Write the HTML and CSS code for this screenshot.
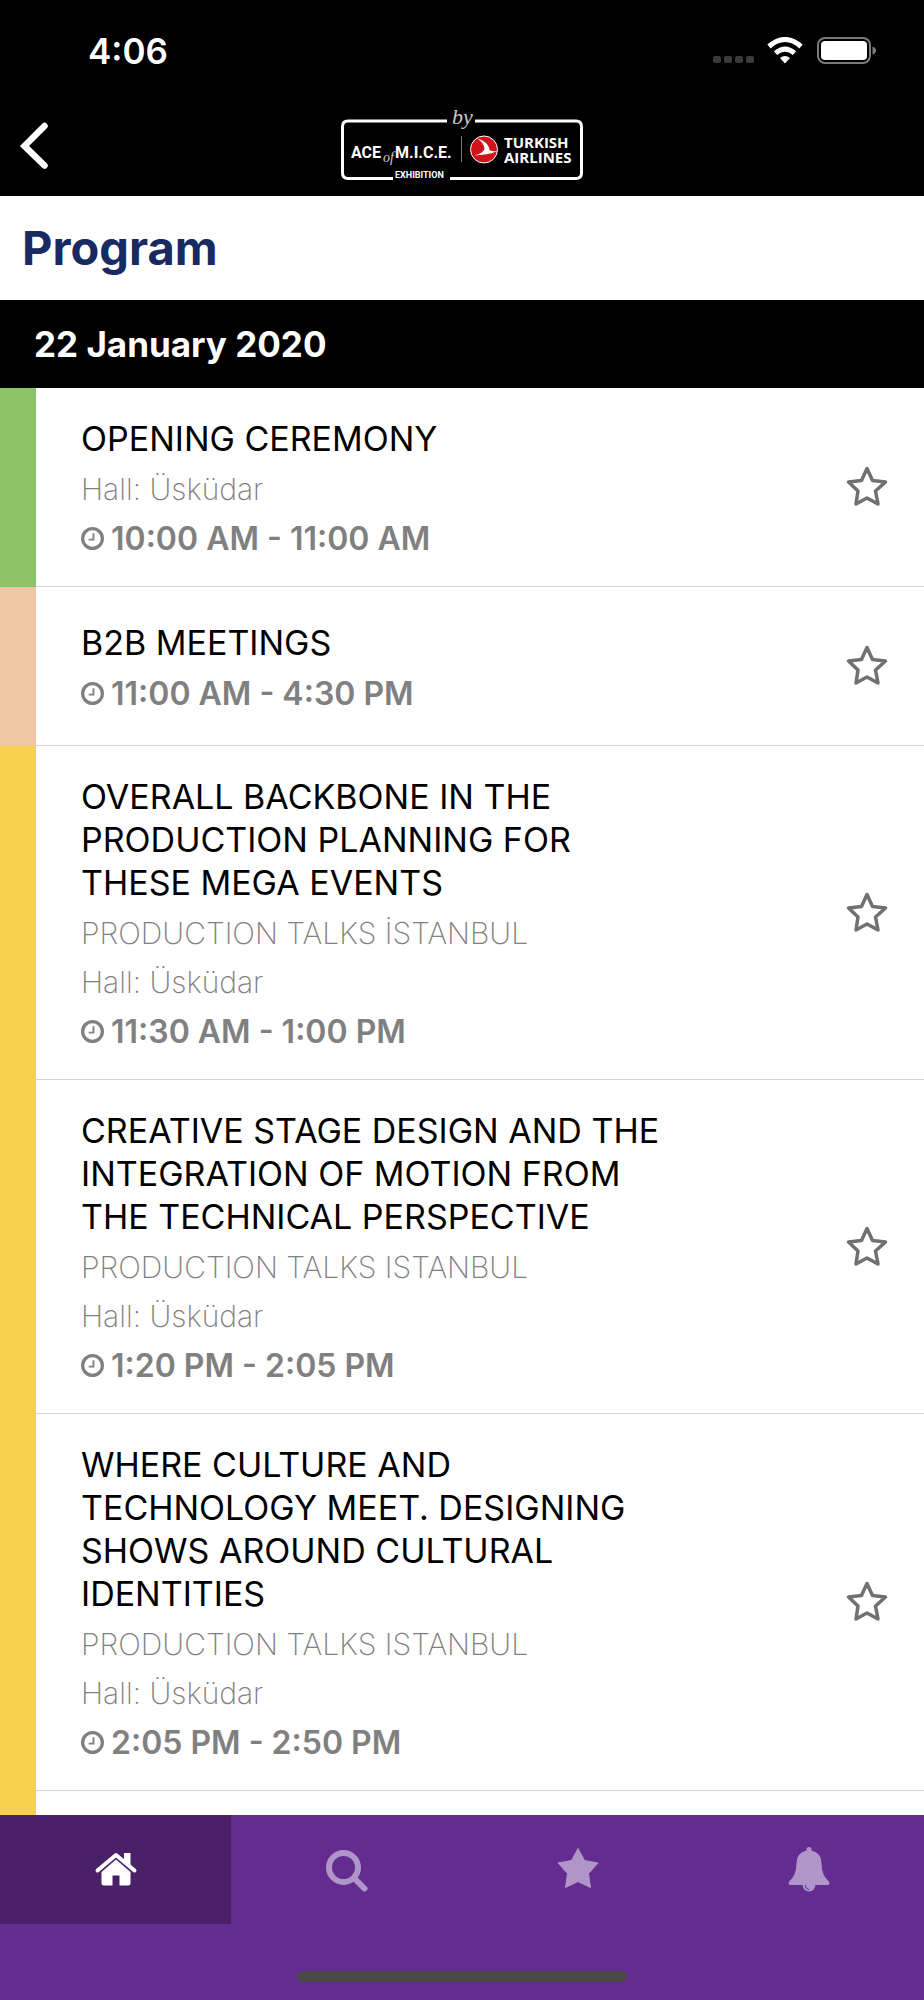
FILE: index.html
```html
<!DOCTYPE html>
<html lang="en">

<head>
    <meta charset="UTF-8">
    <meta name="viewport" content="width=device-width, initial-scale=1.0">
    <title>Program</title>
    <link rel="stylesheet" href="styles.css">
</head>

<body>
    <!-- shared icons -->
    <svg class="sprite" aria-hidden="true">
        <symbol id="clock" viewBox="0 0 24 24">
            <circle cx="12" cy="12" r="10.300" fill="none" stroke="currentColor" stroke-width="3.400" />
            <path d="M13 6.500V13.200H8" fill="none" stroke="currentColor" stroke-width="2" />
        </symbol>
        <symbol id="star" viewBox="0 1 42 42">
            <path d="M21 3.500L26.500 15.500L39.500 17L29.500 26L32 39L21 33L10 39L12 26L2.500 17L15.500 15.500Z" fill="none" stroke="currentColor" stroke-width="3.500" stroke-linejoin="round" />
        </symbol>
    </svg>

    <div class="app">
        <header class="top">
            <div class="status">
                <span class="time">4:06</span>
                <svg class="status-icons" viewBox="0 0 164 28" aria-hidden="true">
                    <g fill="#3a3a3a">
                        <rect x="1" y="19" width="8" height="7" rx="2" />
                        <rect x="12" y="19" width="8" height="7" rx="2" />
                        <rect x="23" y="19" width="8" height="7" rx="2" />
                        <rect x="34" y="19" width="8" height="7" rx="2" />
                    </g>
                    <g fill="none" stroke="#fff" stroke-width="5">
                        <path d="M57 9.500Q73 -4.500 89 9.500" />
                        <path d="M63.500 16.200Q73 8.200 82.500 16.200" />
                    </g>
                    <path d="M68 21Q73 17 78 21L73 26.500Z" fill="#fff" />
                    <rect x="106" y="1" width="52" height="25" rx="7" fill="none" stroke="#7a7a7a" stroke-width="2" />
                    <rect x="109" y="4" width="46" height="19" rx="4" fill="#fff" />
                    <path d="M160.500 9.500Q164 10.500 164 13.500Q164 16.500 160.500 17.500Z" fill="#7a7a7a" />
                </svg>
            </div>
            <div class="nav">
                <button class="back" type="button" aria-label="Back">
                    <svg viewBox="0 0 28 48"><path d="M24.500 4L4.500 24L24.500 43.500" fill="none" stroke="currentColor" stroke-width="6.500" stroke-linecap="round" /></svg>
                </button>
                <svg class="logo" viewBox="0 0 244 78" role="img" aria-label="ACE of M.I.C.E. Exhibition by Turkish Airlines">
                    <g fill="none" stroke="#fff" stroke-width="3">
                        <path d="M107 17H8Q2.500 17 2.500 22.500V69Q2.500 74.500 8 74.500H53" />
                        <path d="M135 17H236Q241.500 17 241.500 22.500V69Q241.500 74.500 236 74.500H110" />
                    </g>
                    <g fill="#fff">
                        <text class="logo-main" x="11" y="54">ACE</text>
                        <text class="logo-main" x="55" y="54">M.I.C.E.</text>
                        <text class="logo-sub" x="55" y="74">EXHIBITION</text>
                        <text class="logo-script" x="43" y="58">of</text>
                        <text class="logo-script by" x="112" y="20">by</text>
                        <text class="logo-brand" x="164" y="44">TURKISH</text>
                        <text class="logo-brand" x="164" y="59">AIRLINES</text>
                    </g>
                    <path d="M121.500 32V58" stroke="#777" />
                    <circle cx="144" cy="45.500" r="13.500" fill="#d0121b" stroke="#fff" />
                    <!-- bird -->
                    <path d="M137 34.500Q148 37 150 46.500Q154 48 158.500 46.500Q151 50 145 50.500L134.500 51.500Q143 49 144.500 45Q144.500 39 137 34.500Z" fill="#fff" />
                </svg>
            </div>
        </header>

        <main class="content">
            <h1 class="page-title">Program</h1>
            <h2 class="date">22 January 2020</h2>
            <ul class="sessions">
                <li class="session green">
                    <div class="info">
                        <h3>OPENING CEREMONY</h3>
                        <p>Hall: Üsküdar</p>
                        <p class="hours"><svg><use href="#clock" /></svg>10:00 AM - 11:00 AM</p>
                    </div>
                    <button class="fav" type="button" aria-label="Add to favourites"><svg><use href="#star" /></svg></button>
                </li>
                <li class="session peach">
                    <div class="info">
                        <h3>B2B MEETINGS</h3>
                        <p class="hours"><svg><use href="#clock" /></svg>11:00 AM - 4:30 PM</p>
                    </div>
                    <button class="fav" type="button" aria-label="Add to favourites"><svg><use href="#star" /></svg></button>
                </li>
                <li class="session yellow">
                    <div class="info">
                        <h3>OVERALL BACKBONE IN THE PRODUCTION PLANNING FOR THESE MEGA EVENTS</h3>
                        <p>PRODUCTION TALKS İSTANBUL</p>
                        <p>Hall: Üsküdar</p>
                        <p class="hours"><svg><use href="#clock" /></svg>11:30 AM - 1:00 PM</p>
                    </div>
                    <button class="fav" type="button" aria-label="Add to favourites"><svg><use href="#star" /></svg></button>
                </li>
                <li class="session yellow">
                    <div class="info">
                        <h3>CREATIVE STAGE DESIGN AND THE INTEGRATION OF MOTION FROM THE TECHNICAL PERSPECTIVE</h3>
                        <p>PRODUCTION TALKS ISTANBUL</p>
                        <p>Hall: Üsküdar</p>
                        <p class="hours"><svg><use href="#clock" /></svg>1:20 PM - 2:05 PM</p>
                    </div>
                    <button class="fav" type="button" aria-label="Add to favourites"><svg><use href="#star" /></svg></button>
                </li>
                <li class="session yellow">
                    <div class="info">
                        <h3>WHERE CULTURE AND TECHNOLOGY MEET. DESIGNING SHOWS AROUND CULTURAL IDENTITIES</h3>
                        <p>PRODUCTION TALKS ISTANBUL</p>
                        <p>Hall: Üsküdar</p>
                        <p class="hours"><svg><use href="#clock" /></svg>2:05 PM - 2:50 PM</p>
                    </div>
                    <button class="fav" type="button" aria-label="Add to favourites"><svg><use href="#star" /></svg></button>
                </li>
                <li class="session yellow"></li>
            </ul>
        </main>

        <footer class="bottom">
            <nav class="tabs">
                <a class="active" href="#" aria-label="Home">
                    <svg viewBox="0 0 44 44">
                        <path d="M3.500 22.500L22 7L40.500 22.500" fill="none" stroke="currentColor" stroke-width="4" stroke-linecap="round" stroke-linejoin="round" />
                        <path d="M30 5H36.500V18L30 12Z" fill="currentColor" />
                        <path d="M7.500 24L22 11.500L36.500 24V35Q36.500 37.500 34 37.500H25.500V27.500H18.500V37.500H10Q7.500 37.500 7.500 35Z" fill="currentColor" />
                    </svg>
                </a>
                <a href="#" aria-label="Search">
                    <svg viewBox="0 0 44 44">
                        <circle cx="18.500" cy="19.500" r="14.500" fill="none" stroke="currentColor" stroke-width="6" />
                        <path d="M30 31L39.500 40.500" stroke="currentColor" stroke-width="6" stroke-linecap="round" />
                    </svg>
                </a>
                <a href="#" aria-label="Favourites">
                    <svg viewBox="0 0 44 44">
                        <path d="M22 0.500L28.500 12.500L42 15L32.500 25.500L34.500 39.500L22 33.500L9.500 39.500L11.500 25.500L2 15L15.500 12.500Z" fill="currentColor" stroke="currentColor" stroke-linejoin="round" />
                    </svg>
                </a>
                <a href="#" aria-label="Notifications">
                    <svg viewBox="0 0 44 44">
                        <path d="M19.500 1.500Q19.500 -1 22 -1Q24.500 -1 24.500 1.500V2.500Q34.500 5 34.500 15Q34.500 27 41.500 33Q44 37 40 37H28.500Q27.500 43.500 22 43.500Q16.500 43.500 15.500 37H4Q0 37 2.500 33Q9.500 27 9.500 15Q9.500 5 19.500 2.500Z" fill="currentColor" />
                        <path d="M18 37Q18.500 41 22 41.500" fill="none" stroke="#642c90" />
                    </svg>
                </a>
            </nav>
            <div class="home-bar"></div>
        </footer>
    </div>
</body>

</html>
```
FILE: styles.css
```css
* {
    margin: 0;
    padding: 0;
    box-sizing: border-box;
}

body {
    font-family: Inter, "Liberation Sans", sans-serif;
    background: #fff;
}

button {
    border: 0;
    background: none;
    cursor: pointer;
}

svg {
    display: block;
}

.sprite {
    display: none;
}

.app {
    display: flex;
    flex-direction: column;
    height: 100vh;
}

/* header */
.top {
    background: #000;
    color: #fff;
}

.status {
    display: flex;
    align-items: center;
    justify-content: space-between;
    height: 101px;
    padding: 0 48px 0 88px;
}

.time {
    font-size: 35px;
    font-weight: 600;
}

.status-icons {
    width: 164px;
    height: 28px;
}

.nav {
    display: grid;
    grid-template-columns: 1fr auto 1fr;
    align-items: start;
    height: 95px;
    padding: 3px 20px 0;
}

.back {
    width: 28px;
    height: 48px;
    margin-top: 18px;
    color: #fff;
}

.logo {
    width: 244px;
    height: 78px;
}

.logo-main {
    font: bold 16px Roboto, sans-serif;
}

.logo-sub {
    font: bold 9px Roboto, sans-serif;
}

.logo-script {
    font: italic 14px "Liberation Serif", serif;
    fill: #ccc;
}

.logo-script.by {
    font-size: 22px;
}

.logo-brand {
    font: bold 15px "Open Sans", sans-serif;
}

/* program list */
.content {
    flex: 1;
    min-height: 0;
    overflow: hidden;
}

.page-title {
    padding: 0 22px;
    font-size: 47px;
    font-weight: 700;
    line-height: 104px;
    color: #182a62;
}

.date {
    padding: 0 34px;
    font-size: 35px;
    font-weight: 700;
    line-height: 88px;
    color: #fff;
    background: #000;
}

.sessions {
    list-style: none;
}

.session {
    display: flex;
    align-items: stretch;
    min-height: 159px;
    border-left: 36px solid;
}

.green {
    border-left-color: #8cc369;
}

.peach {
    border-left-color: #efc7a5;
}

.yellow {
    border-left-color: #f8d24e;
}

.info {
    flex: 1;
    display: flex;
    flex-direction: column;
    justify-content: center;
    padding: 29px 120px 23px 45px;
    border-bottom: 1px solid #d4d4d4;
}

.info h3 {
    margin-bottom: 5px;
    font-size: 34px;
    font-weight: 400;
    line-height: 43px;
}

.info p {
    font-size: 30px;
    font-weight: 200;
    line-height: 49px;
    color: #808080;
}

.info .hours {
    display: flex;
    align-items: center;
    gap: 7px;
    font-size: 32px;
    font-weight: 600;
}

.hours svg {
    width: 23px;
    height: 23px;
}

.fav {
    display: flex;
    align-items: center;
    justify-content: center;
    width: 114px;
    color: #707070;
    border-bottom: 1px solid #d4d4d4;
}

.fav svg {
    width: 42px;
    height: 42px;
}

/* bottom bar */
.bottom {
    height: 185px;
    background: #642c90;
}

.tabs {
    display: flex;
    height: 109px;
}

.tabs a {
    flex: 1;
    display: flex;
    align-items: center;
    justify-content: center;
    color: #b096c8;
}

.tabs .active {
    color: #fff;
    background: #4a2069;
}

.tabs svg {
    width: 44px;
    height: 44px;
    overflow: visible;
}

.home-bar {
    width: 330px;
    height: 11px;
    margin: 47px auto 0;
    border-radius: 6px;
    background: #4a4a4a;
}
```
